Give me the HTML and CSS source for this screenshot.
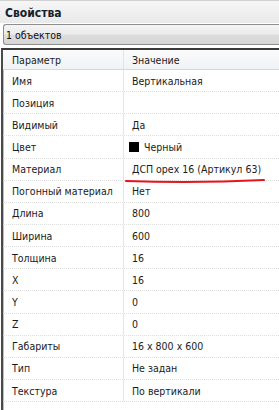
FILE: index.html
```html
<!DOCTYPE html>
<html lang="ru">
<head>
<meta charset="utf-8">
<link rel="stylesheet" href="styles.css">
</head>
<body>
<div class="panel">
  <div class="title">Свойства</div>
  <div class="combo">1 объектов</div>
  <div class="grid">
    <div class="row head"><div class="c1">Параметр</div><div class="c2">Значение</div></div>
    <div class="row"><div class="c1">Имя</div><div class="c2">Вертикальная</div></div>
    <div class="row"><div class="c1">Позиция</div><div class="c2"></div></div>
    <div class="row"><div class="c1">Видимый</div><div class="c2">Да</div></div>
    <div class="row"><div class="c1">Цвет</div><div class="c2"><span class="swatch"></span>Черный</div></div>
    <div class="row"><div class="c1">Материал</div><div class="c2">ДСП орех 16 (Артикул 63)</div></div>
    <div class="row"><div class="c1">Погонный материал</div><div class="c2">Нет</div></div>
    <div class="row"><div class="c1">Длина</div><div class="c2">800</div></div>
    <div class="row"><div class="c1">Ширина</div><div class="c2">600</div></div>
    <div class="row"><div class="c1">Толщина</div><div class="c2">16</div></div>
    <div class="row"><div class="c1">X</div><div class="c2">16</div></div>
    <div class="row"><div class="c1">Y</div><div class="c2">0</div></div>
    <div class="row"><div class="c1">Z</div><div class="c2">0</div></div>
    <div class="row"><div class="c1">Габариты</div><div class="c2">16 x 800 x 600</div></div>
    <div class="row"><div class="c1">Тип</div><div class="c2">Не задан</div></div>
    <div class="row"><div class="c1">Текстура</div><div class="c2">По вертикали</div></div>
  </div>
  <svg class="mark" width="279" height="10" viewBox="0 0 279 10">
    <path d="M126 4 Q195 6.5 264 3" stroke="#e8141c" stroke-width="2" fill="none" stroke-linecap="round"/>
  </svg>
</div>
</body>
</html>
```

FILE: styles.css
```css
* { box-sizing: border-box; }
html, body { margin: 0; padding: 0; background: #fff; }
body {
  width: 279px;
  height: 410px;
  overflow: hidden;
  font-family: "DejaVu Sans Condensed", "DejaVu Sans", sans-serif;
  font-size: 10.5px;
  color: #1b1b1b;
}
.panel { position: relative; height: 410px; }
.title {
  height: 23px;
  border-top: 1px solid #d0d0d0;
  background: linear-gradient(#f6f6f6, #e9e9e9);
  padding: 5px 0 0 5px;
  font-weight: bold;
  font-size: 12px;
  color: #16212c;
}
.combo {
  margin: 1px 0 0 3px;
  height: 21px;
  border: 1px solid #8e8e8e;
  border-right: none;
  border-radius: 3px 0 0 3px;
  background: linear-gradient(#f4f4f4 0%, #ececec 45%, #dcdcdc 55%, #d6d6d6 100%);
  padding: 4px 0 0 2px;
  color: #111;
}
.grid {
  margin: 3px 0 0 1px;
  border-top: 2px solid #3a3a3a;
  border-left: 2px solid #4a4a4a;
  box-shadow: inset 1px 0 0 #bdbdbd;
  height: 362px;
}
.row {
  display: grid;
  grid-template-columns: 121px 1fr;
  height: 22.15px;
  border-bottom: 1px dotted #dedede;
  align-items: center;
}
.row.head {
  height: 20px;
  background: linear-gradient(#fbfbfc, #f1f2f4);
  border-bottom: 1px solid #d8d8d8;
}
.c1 {
  padding-left: 9px;
  height: 100%;
  display: flex;
  align-items: center;
  border-right: 1px solid #e4e4e4;
}
.c2 {
  padding-left: 8px;
  display: flex;
  align-items: center;
}
.swatch {
  width: 10px;
  height: 10px;
  background: #000;
  margin: 0 5px 0 -3px;
}
.mark {
  position: absolute;
  left: 0;
  top: 177px;
}
```
